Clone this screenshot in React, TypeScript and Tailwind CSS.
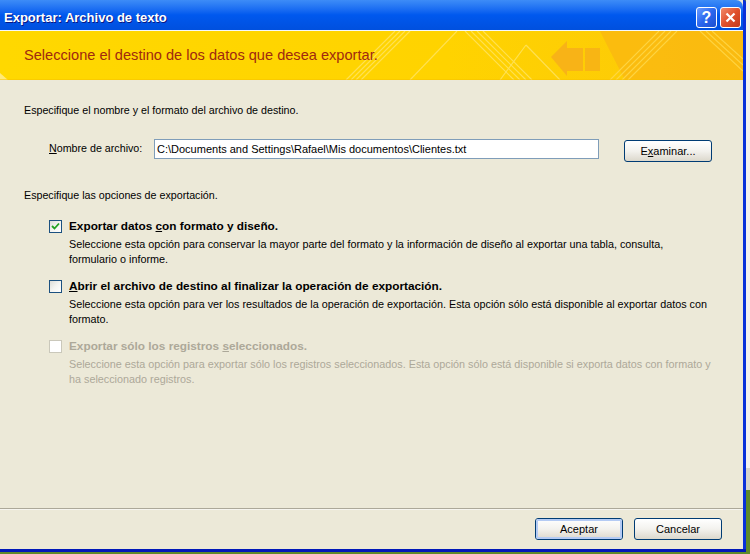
import React from "react";

const font = { fontFamily: '"Liberation Sans", Arial, sans-serif' };

function Check({ checked, disabled }: { checked?: boolean; disabled?: boolean }) {
  return (
    <div
      className={
        "w-[13px] h-[13px] shrink-0 border flex items-center justify-center " +
        (disabled
          ? "border-[#CAC8BB] bg-white"
          : "border-[#1C5180] bg-gradient-to-br from-[#DCDCD7] via-[#F4F4F1] to-white")
      }
    >
      {checked && (
        <svg width="9" height="9" viewBox="0 0 9 9">
          <path d="M1 4 L3.5 6.5 L8 1.5" stroke="#21A121" strokeWidth="1.8" fill="none" />
        </svg>
      )}
    </div>
  );
}

function XPButton({ children, def }: { children: React.ReactNode; def?: boolean }) {
  return (
    <div className="w-[88px] h-[22px] rounded-[3px] border border-[#003C74] bg-gradient-to-b from-white via-[#F3F2EE] to-[#DCD8CC] flex items-center justify-center">
      <div
        className={
          "w-full h-full rounded-[2px] flex items-center justify-center text-[11px] text-black " +
          (def ? "border-2 border-[#B4CBF4]" : "")
        }
      >
        {children}
      </div>
    </div>
  );
}

function Option({
  checked,
  disabled,
  label,
  lines,
}: {
  checked?: boolean;
  disabled?: boolean;
  label: React.ReactNode;
  lines: string[];
}) {
  return (
    <div className="flex flex-col pl-[49px]">
      <div className="flex items-center h-[14px] gap-[7px]">
        <Check checked={checked} disabled={disabled} />
        <div className={"text-[11.8px] font-bold leading-[14px] " + (disabled ? "text-[#ACA899]" : "text-black")}>
          {label}
        </div>
      </div>
      <div className={"mt-[4px] pl-[20px] text-[10.8px] leading-[15px] " + (disabled ? "text-[#ACA899]" : "text-black")}>
        {lines.map((l, i) => (
          <div key={i}>{l}</div>
        ))}
      </div>
    </div>
  );
}

function Banner() {
  return (
    <div className="relative h-[49px] w-full overflow-hidden">
      <svg className="absolute inset-0" width="743" height="49" viewBox="0 0 743 49">
        <defs>
          <linearGradient id="by" x1="0" y1="0" x2="1" y2="0">
            <stop offset="0" stopColor="#FFD800" />
            <stop offset="0.6" stopColor="#FFD300" />
            <stop offset="1" stopColor="#FCC80A" />
          </linearGradient>
        </defs>
        <rect width="743" height="49" fill="url(#by)" />
        <polygon points="0,42 8,49 0,49" fill="#FFE97A" />
        <g stroke="#FFE566" strokeWidth="1.2" opacity="0.8">
          <line x1="346" y1="49" x2="395" y2="0" />
          <line x1="351" y1="49" x2="400" y2="0" />
          <line x1="356" y1="49" x2="405" y2="0" />
          <line x1="361" y1="49" x2="410" y2="0" />
          <line x1="410" y1="49" x2="457" y2="0" />
          <line x1="465" y1="0" x2="514" y2="49" />
          <line x1="471" y1="0" x2="520" y2="49" />
          <line x1="477" y1="0" x2="526" y2="49" />
          <line x1="483" y1="0" x2="532" y2="49" />
          <line x1="500" y1="49" x2="526" y2="14" />
          <line x1="526" y1="14" x2="560" y2="49" />
        </g>
        <polygon points="600,0 743,0 743,49 625,49 610,20" fill="#F9B512" opacity="0.7" />
        <polygon points="551,26 567,10 567,17 583,17 583,40 567,40 567,45" fill="#F7AE1B" opacity="0.85" />
        <rect x="585" y="17" width="15" height="23" fill="#F7B018" opacity="0.85" />
        <g stroke="#FFD84A" strokeWidth="1.2" opacity="0.85">
          <line x1="610" y1="49" x2="659" y2="0" />
          <line x1="616" y1="49" x2="665" y2="0" />
          <line x1="622" y1="49" x2="671" y2="0" />
          <line x1="628" y1="49" x2="677" y2="0" />
          <line x1="700" y1="0" x2="743" y2="40" />
          <line x1="706" y1="0" x2="743" y2="34" />
          <line x1="712" y1="0" x2="743" y2="28" />
        </g>
        <rect x="0" y="48" width="743" height="1" fill="#F5C000" opacity="0.5" />
      </svg>
      <div className="relative pl-[24px] pt-[15px] text-[14.6px] leading-[18px] text-[#A0290F]">
        Seleccione el destino de los datos que desea exportar.
      </div>
    </div>
  );
}

export default function App() {
  return (
    <div className="w-[750px] h-[554px] overflow-hidden flex flex-col bg-[#6E8E2A]" style={font}>
      <div className="flex h-[552px]">
        <div className="w-[746px] flex flex-col">
          <div className="flex flex-1 min-h-0">
            <div className="w-[743px] flex flex-col bg-[#ECE9D8]">
              {/* Title bar */}
              <div className="h-[30px] rounded-tr-[7px] bg-gradient-to-b from-[#3D8CF7] via-[#0058EE] to-[#0050DE] flex items-start justify-between pl-[4px] pr-[2px]">
                <div
                  className="mt-[10px] text-white font-bold text-[13px] leading-[16px]"
                  style={{ textShadow: "1px 1px 0 #0A1883" }}
                >
                  Exportar: Archivo de texto
                </div>
                <div className="flex gap-[3px] mt-[7px]">
                  <div className="w-[21px] h-[21px] rounded-[3px] border border-white bg-gradient-to-br from-[#6A9CFF] via-[#2A66EE] to-[#1D4FD0] flex items-center justify-center text-white font-bold text-[16px] leading-none">
                    ?
                  </div>
                  <div className="w-[21px] h-[21px] rounded-[3px] border border-white bg-gradient-to-br from-[#F08A6A] via-[#E0502C] to-[#C53A1B] flex items-center justify-center">
                    <svg width="11" height="11" viewBox="0 0 11 11">
                      <path d="M1.5 1.5 L9.5 9.5 M9.5 1.5 L1.5 9.5" stroke="white" strokeWidth="2.2" />
                    </svg>
                  </div>
                </div>
              </div>
              <div className="h-[1px] bg-[#F4F8FF]" />
              <Banner />
              {/* Body */}
              <div className="flex-1 flex flex-col text-[10.7px] text-black">
                <div className="pl-[24px] mt-[23px] leading-[14px]">
                  Especifique el nombre y el formato del archivo de destino.
                </div>
                <div className="flex items-start mt-[22px] pl-[49px]">
                  <div className="mt-[2px] leading-[14px] w-[105px]">
                    <span className="underline">N</span>ombre de archivo:
                  </div>
                  <div className="w-[445px] h-[20px] border border-[#7F9DB9] bg-white pl-[2px] leading-[18px] text-[11px]">
                    C:\Documents and Settings\Rafael\Mis documentos\Clientes.txt
                  </div>
                  <div className="ml-[25px] mt-[1px]">
                    <XPButton>
                      E<span className="underline">x</span>aminar...
                    </XPButton>
                  </div>
                </div>
                <div className="pl-[24px] mt-[26px] leading-[14px]">Especifique las opciones de exportación.</div>
                <div className="mt-[17px]">
                  <Option
                    checked
                    label={
                      <>
                        Exportar datos <span className="underline">c</span>on formato y diseño.
                      </>
                    }
                    lines={[
                      "Seleccione esta opción para conservar la mayor parte del formato y la información de diseño al exportar una tabla, consulta,",
                      "formulario o informe.",
                    ]}
                  />
                </div>
                <div className="mt-[12px]">
                  <Option
                    label={
                      <>
                        <span className="underline">A</span>brir el archivo de destino al finalizar la operación de exportación.
                      </>
                    }
                    lines={[
                      "Seleccione esta opción para ver los resultados de la operación de exportación. Esta opción sólo está disponible al exportar datos con",
                      "formato.",
                    ]}
                  />
                </div>
                <div className="mt-[12px]">
                  <Option
                    disabled
                    label={
                      <>
                        Exportar sólo los registros <span className="underline">s</span>eleccionados.
                      </>
                    }
                    lines={[
                      "Seleccione esta opción para exportar sólo los registros seleccionados. Esta opción sólo está disponible si exporta datos con formato y",
                      "ha seleccionado registros.",
                    ]}
                  />
                </div>
                <div className="flex-1" />
                <div className="h-[1px] bg-[#ACA899]" />
                <div className="h-[1px] bg-[#F6F5EF]" />
                <div className="flex justify-end gap-[11px] pr-[21px] mt-[8px] mb-[9px]">
                  <XPButton def>Aceptar</XPButton>
                  <XPButton>Cancelar</XPButton>
                </div>
              </div>
            </div>
            <div className="w-[3px] bg-[#0831D9] rounded-tr-[2px]" />
          </div>
          <div className="h-[3px] bg-[#0019B8]" />
        </div>
        <div className="w-[4px] flex flex-col">
          <div className="h-[468px] bg-[#F2F2EE]" />
          <div className="h-[22px] bg-[#D4D4CC]" />
          <div className="flex-1 bg-[#5F8A2A]" />
        </div>
      </div>
      <div className="h-[2px] bg-[#5F8A2A]" />
    </div>
  );
}
